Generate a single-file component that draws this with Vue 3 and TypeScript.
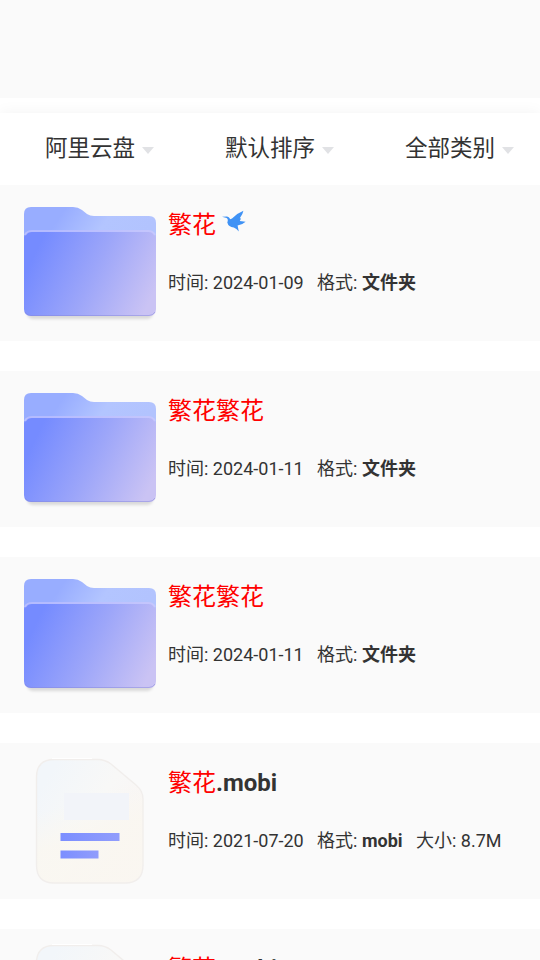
<script setup lang="ts">
  import { ref } from 'vue'

  interface Resource {
    id: number
    type: 'folder' | 'file'
    keyword: string
    suffix: string
    time: string
    format: string
    size?: string
    bird?: boolean
  }

  const filters = ref<string[]>(['阿里云盘', '默认排序', '全部类别'])

  const resources = ref<Resource[]>([
    { id: 1, type: 'folder', keyword: '繁花', suffix: '', time: '2024-01-09', format: '文件夹', bird: true },
    { id: 2, type: 'folder', keyword: '繁花繁花', suffix: '', time: '2024-01-11', format: '文件夹' },
    { id: 3, type: 'folder', keyword: '繁花繁花', suffix: '', time: '2024-01-11', format: '文件夹' },
    { id: 4, type: 'file', keyword: '繁花', suffix: '.mobi', time: '2021-07-20', format: 'mobi', size: '8.7M' },
    { id: 5, type: 'file', keyword: '繁花', suffix: '.mobi', time: '2021-07-20', format: 'mobi', size: '8.7M' },
  ])
</script>

<template>
  <div class="page">
    <div class="header"></div>
    <div class="menu">
      <div v-for="item in filters" :key="item" class="menu-item">
        <span>{{ item }}</span>
        <i class="arrow"></i>
      </div>
    </div>
    <div class="list">
      <div v-for="item in resources" :key="item.id" class="row">
        <svg v-if="item.type === 'folder'" class="icon" viewBox="0 0 132 132">
          <defs>
            <linearGradient :id="`back${item.id}`" x1="0" y1="0" x2="1" y2="0.25">
              <stop offset="0.3" stop-color="#98adff" />
              <stop offset="0.65" stop-color="#b3c5ff" />
              <stop offset="1" stop-color="#b2c3fe" />
            </linearGradient>
            <linearGradient :id="`front${item.id}`" gradientUnits="userSpaceOnUse" x1="14" y1="50" x2="126" y2="104">
              <stop offset="0" stop-color="#758bff" />
              <stop offset="0.5" stop-color="#9da6f9" />
              <stop offset="1" stop-color="#cac3f4" />
            </linearGradient>
            <filter :id="`shade${item.id}`" x="-10%" y="-10%" width="120%" height="130%">
              <feGaussianBlur stdDeviation="1.5" />
            </filter>
          </defs>
          <rect x="3" y="104" width="126" height="18" rx="6" fill="#000" opacity="0.13" :filter="`url(#shade${item.id})`" />
          <path d="M0 17Q0 10 7 10H49Q54 10 58 13L63 17Q66 19 70 19H125Q132 19 132 26V60H0Z" :fill="`url(#back${item.id})`" />
          <path d="M0 40Q2 33 8 33H124Q130 33 132 40V112Q132 119 125 119H7Q0 119 0 112Z" :fill="`url(#front${item.id})`" />
          <path d="M1 38Q3 34 8 34H124Q129 34 131 38" fill="none" stroke="#c9cbff" stroke-width="2" opacity="0.75" />
          <path d="M1 115Q3 118.5 7 118.5H125Q129 118.5 131 115" fill="none" stroke="#8587dc" stroke-width="1" opacity="0.5" />
        </svg>
        <svg v-else class="icon file" viewBox="0 0 132 132">
          <defs>
            <linearGradient :id="`paper${item.id}`" x1="0.1" y1="0.15" x2="0.9" y2="0.75">
              <stop offset="0" stop-color="#f2f6fa" />
              <stop offset="0.5" stop-color="#f8f8f7" />
              <stop offset="1" stop-color="#f9f4f4" />
            </linearGradient>
            <linearGradient :id="`warm${item.id}`" x1="0" y1="0" x2="0.3" y2="1">
              <stop offset="0.4" stop-color="#faf7f0" stop-opacity="0" />
              <stop offset="0.7" stop-color="#faf7f0" stop-opacity="0.8" />
            </linearGradient>
            <linearGradient :id="`bar${item.id}`" x1="0" y1="0" x2="1" y2="0">
              <stop offset="0" stop-color="#7b8eff" />
              <stop offset="1" stop-color="#919dfc" />
            </linearGradient>
          </defs>
          <path d="M30 3.5H74Q81 3.5 87 8L112 29Q119 35 119 43V109Q119 127 101 127H30Q12.5 127 12.5 109V21Q12.5 3.5 30 3.5Z" :fill="`url(#paper${item.id})`" />
          <path d="M30 3.5H74Q81 3.5 87 8L112 29Q119 35 119 43V109Q119 127 101 127H30Q12.5 127 12.5 109V21Q12.5 3.5 30 3.5Z" :fill="`url(#warm${item.id})`" stroke="#f1eeec" stroke-width="1.4" />
          <path d="M28 2.5H68" stroke="#fff" stroke-width="1" />
          <rect x="40" y="37" width="65" height="27" fill="#f2f4f9" />
          <rect x="36.5" y="77" width="59" height="8" :fill="`url(#bar${item.id})`" />
          <rect x="36.5" y="94.5" width="38" height="8" :fill="`url(#bar${item.id})`" />
        </svg>
        <div class="info">
          <div class="title">
            <span class="keyword">{{ item.keyword }}</span><b v-if="item.suffix">{{ item.suffix }}</b>
            <svg v-if="item.bird" class="bird" viewBox="0 0 24 24">
              <path d="M0 6.8L5 6.6Q7 6.6 8.3 9.2L10 8.4Q15 3.4 21.4 0.8Q20.8 4.5 17.8 8.2L19 8.4L17.8 11L23.6 11.8Q20.5 14.8 15.6 15.6L16.8 21.5Q14.5 18.4 11.8 17.5Q6.5 17.2 5.3 12.6Q6.6 9.4 4.6 8Z" fill="#3f92f5" />
            </svg>
          </div>
          <div class="meta">
            <span>时间: {{ item.time }}</span>
            <span>格式: <b>{{ item.format }}</b></span>
            <span v-if="item.size">大小: {{ item.size }}</span>
          </div>
        </div>
      </div>
    </div>
  </div>
</template>

<style>
body {
  background-color: #fff;
  overflow: hidden;
}
</style>

<style scoped>
.page {
  height: 960px;
  overflow: hidden;
  font-family: Roboto, "Noto Sans CJK SC", sans-serif;
  color: #333;
}
.header {
  height: 98px;
  margin-bottom: 15px;
  background-color: #fafafa;
}
.menu {
  display: flex;
  height: 72px;
  background-color: #fff;
  box-shadow: 0 0 15px rgba(0, 0, 0, 0.05);
  clip-path: inset(-15px 0 0 0);
}
.menu-item {
  display: flex;
  align-items: center;
  width: 180px;
  padding-left: 45px;
  box-sizing: border-box;
  font-size: 22.5px;
  line-height: 33px;
  white-space: nowrap;
}
.menu-item span {
  margin-top: -2px;
}
.arrow {
  margin: 2px 0 0 7px;
  border: 6.5px solid transparent;
  border-top: 7px solid #e1e2e5;
  border-bottom: 0;
}
.row {
  display: flex;
  height: 156px;
  margin-bottom: 30px;
  padding: 12px 24px;
  box-sizing: border-box;
  background-color: #fafafa;
}
.icon {
  flex: none;
  width: 132px;
  height: 132px;
  margin-right: 12px;
}
.file {
  margin-top: 1px;
}
.info {
  padding-top: 10px;
  white-space: nowrap;
}
.title {
  display: flex;
  height: 36px;
  font-size: 24px;
  line-height: 36px;
}
.keyword {
  color: #f00;
}
.bird {
  width: 24px;
  height: 24px;
  margin: 3px 0 0 6px;
}
.meta {
  display: flex;
  gap: 13.4px;
  margin-top: 26px;
  font-size: 18px;
  line-height: 27px;
}
</style>
